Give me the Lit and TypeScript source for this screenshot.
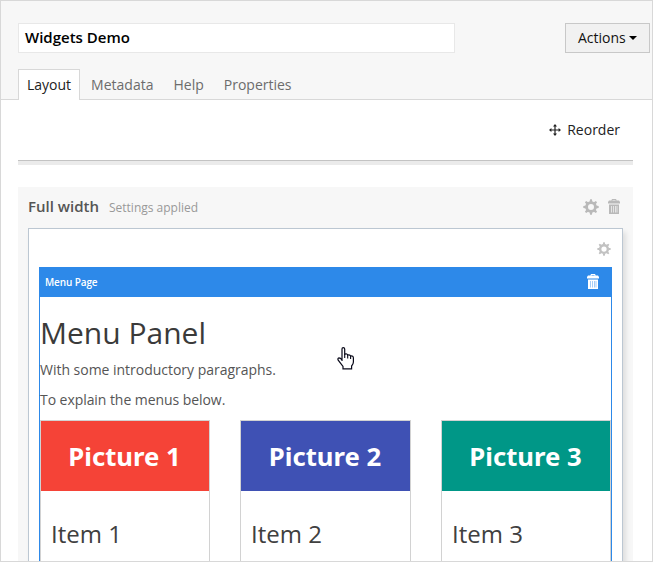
import { LitElement, html, css, svg } from "lit";
import { customElement, property } from "lit/decorators.js";

const teeth = [0, 45, 90, 135, 180, 225, 270, 315];

const gear = html`<svg class="gear" viewBox="0 0 16 16">
  <circle cx="8" cy="8" r="4.4" fill="none" stroke="currentColor" stroke-width="2.8" />
  ${teeth.map((a) => svg`<path d="M6.6 3L7.1 .3H8.9L9.4 3Z" fill="currentColor" transform="rotate(${a} 8 8)" />`)}
</svg>`;

const trash = html`<svg class="trash" viewBox="0 0 12 15">
  <path d="M4 2V.5H8V2" fill="none" stroke="currentColor" />
  <path d="M1 1.5H11L12 3V4.5H0V3Z" fill="currentColor" />
  <path d="M1 5.5H11V15H1Z" fill="currentColor" />
  <path d="M3.5 7V13.5M5.5 7V13.5M7.5 7V13.5M9 7V13.5" class="slots" fill="none" />
</svg>`;

@customElement("menu-card")
export class MenuCard extends LitElement {
  @property() tone = "red";
  @property({ type: Number }) number = 1;

  static styles = css`
    :host { display: block; box-sizing: border-box; height: 160px; border: 1px solid #d2d2d2; border-bottom: 0; }
    .picture {
      box-sizing: border-box; height: 70px; padding: 2px 1px 0 0; text-align: center;
      color: #fff; font: 700 25.7px/68px "Noto Sans", sans-serif; white-space: pre;
    }
    .red { background: #f54337; }
    .indigo { background: #3f51b4; }
    .teal { background: #009787; }
    .title { margin: 26px 0 0 10px; font: 400 24px/34px "Open Sans", sans-serif; color: #404040; }
  `;

  render() {
    return html`<div class="picture ${this.tone}">Picture ${this.number}</div>
      <div class="title">Item ${this.number}</div>`;
  }
}

@customElement("app-root")
export class AppRoot extends LitElement {
  static styles = css`
    :host {
      display: block; position: relative; box-sizing: border-box; width: 653px; height: 562px; overflow: hidden;
      border: 1px solid #d8d8d8; background: #fff; color: #222;
      font: 14px/20px "Open Sans", sans-serif;
    }
    svg { display: block; flex: none; }
    header { background: #f7f7f7; border-bottom: 1px solid #d8d8d8; padding: 22px 2px 0 17px; height: 76px; }
    .top { display: flex; justify-content: space-between; }
    .name { box-sizing: border-box; width: 437px; height: 30px; border: 1px solid #e8e8e8; background: #fff; padding-left: 6px; font-size: 15px; font-weight: 600; line-height: 27px; color: #000; }
    .actions { box-sizing: border-box; width: 85px; height: 30px; border: 1px solid #c8c8c8; background: #f1f1f1; display: flex; align-items: center; padding-left: 12px; gap: 3px; color: #111; }
    .caret { width: 8px; height: 4px; }
    .tabs { display: flex; margin-top: 16px; height: 31px; color: #6c6c6c; }
    .tab { box-sizing: border-box; border: 1px solid transparent; border-bottom: 0; height: 31px; line-height: 30px; padding: 0 8px; margin-right: 2px; }
    .tab.active { background: #fff; border-color: #d8d8d8; color: #222; }
    main { padding: 0 19px 0 17px; }
    .tools { height: 60px; display: flex; justify-content: flex-end; align-items: center; gap: 6px; padding-right: 13px; }
    .move { width: 12px; height: 12px; }
    .rule { height: 4px; background: #ebebeb; border-top: 1px solid #c3c3c3; }
    .section { margin-top: 22px; background: #f7f7f7; padding: 0 10px; height: 400px; }
    .section-head { box-sizing: border-box; height: 41px; padding-bottom: 2px; display: flex; align-items: center; color: #b9b9b9; }
    .section-head .label { margin-bottom: 2px; font-size: 15px; font-weight: 600; color: #555; }
    .section-head .note { font-size: 12px; color: #999; margin: 2px 0 0 10px; flex: 1; }
    .gear { width: 16px; height: 16px; }
    .trash { width: 12px; height: 15px; }
    .section-head .gear { margin-right: 9px; }
    .section-head .trash { margin-right: 3px; }
    .slots { stroke: #e5e5e5; stroke-width: 1; }
    .bar .slots { stroke: #a5cdf8; }
    .panel { box-sizing: border-box; height: 380px; border: 1px solid #bcc7d2; background: #fff; padding: 0 10px; box-shadow: 3px 4px 5px rgba(0,0,0,.1); }
    .panel-head { height: 38px; display: flex; justify-content: flex-end; align-items: center; color: #c2c2c2; }
    .panel-head .gear { width: 14px; height: 14px; margin: 1px 1px 0 0; }
    .widget { border: 1px solid #2d89e9; border-top: 0; height: 330px; }
    .bar { height: 30px; background: #2d89e9; color: #fff; display: flex; align-items: center; justify-content: space-between; padding: 0 12px 0 5px; font-size: 10px; font-weight: 600; letter-spacing: -.12px; }
    .bar .trash { margin-bottom: 2px; }
    h1 { margin: 15px 0 0 0; font-weight: 400; font-size: 30px; line-height: 42px; color: #3a3a3a; }
    p { margin: 6px 0 0; line-height: 20px; color: #555; letter-spacing: -.02px; }
    p + p { margin-top: 10px; letter-spacing: -.06px; }
    .cards { display: grid; grid-template-columns: 200px 201px 170px; margin: 10px 0 0; }
    .cards menu-card { width: 170px; }
    .cards menu-card:nth-child(2) { width: 171px; }
    .cursor { position: absolute; left: 336px; top: 346px; width: 18px; height: 23px; }
  `;

  render() {
    return html`
      <header>
        <div class="top">
          <div class="name">Widgets Demo</div>
          <div class="actions"><span>Actions</span><svg class="caret" viewBox="0 0 8 4"><path d="M0 0H8L4 4Z" /></svg></div>
        </div>
        <nav class="tabs">
          <div class="tab active">Layout</div><div class="tab">Metadata</div><div class="tab">Help</div><div class="tab">Properties</div>
        </nav>
      </header>
      <main>
        <div class="tools">
          <svg class="move" viewBox="0 0 12 12"><path d="M6 1V11M1 6H11" stroke="#222" stroke-width="1.2" /><path d="M6 0L8 2.4H4ZM6 12L4 9.6H8ZM0 6L2.4 4V8ZM12 6L9.6 8V4Z" fill="#222" /></svg>
          <span>Reorder</span>
        </div>
        <div class="rule"></div>
        <section class="section">
          <div class="section-head"><span class="label">Full width</span><span class="note">Settings applied</span>${gear}${trash}</div>
          <div class="panel">
            <div class="panel-head">${gear}</div>
            <div class="widget">
              <div class="bar"><span>Menu Page</span>${trash}</div>
              <h1>Menu Panel</h1>
              <p>With some introductory paragraphs.</p>
              <p>To explain the menus below.</p>
              <div class="cards">
                <menu-card tone="red" number="1"></menu-card>
                <menu-card tone="indigo" number="2"></menu-card>
                <menu-card tone="teal" number="3"></menu-card>
              </div>
            </div>
          </div>
        </section>
      </main>
      <svg class="cursor" viewBox="0 0 18 23">
        <path d="M5 14V2Q5 .7 6.3 .7T7.7 2V7.2Q10.2 6.4 10.7 8Q13 7.3 13.6 9Q16.4 8.6 16.4 11V15Q16.4 17 14.6 19V21.8H6V19.5L1.2 13.2Q.3 11.2 2 10.8Q3.5 10.8 5 13Z" fill="#fff" stroke="#080818" stroke-width="1.2" />
        <path d="M7.7 7V11M10.7 8V11.5M13.6 9V12" stroke="#080818" stroke-width="1.1" />
      </svg>`;
  }
}
